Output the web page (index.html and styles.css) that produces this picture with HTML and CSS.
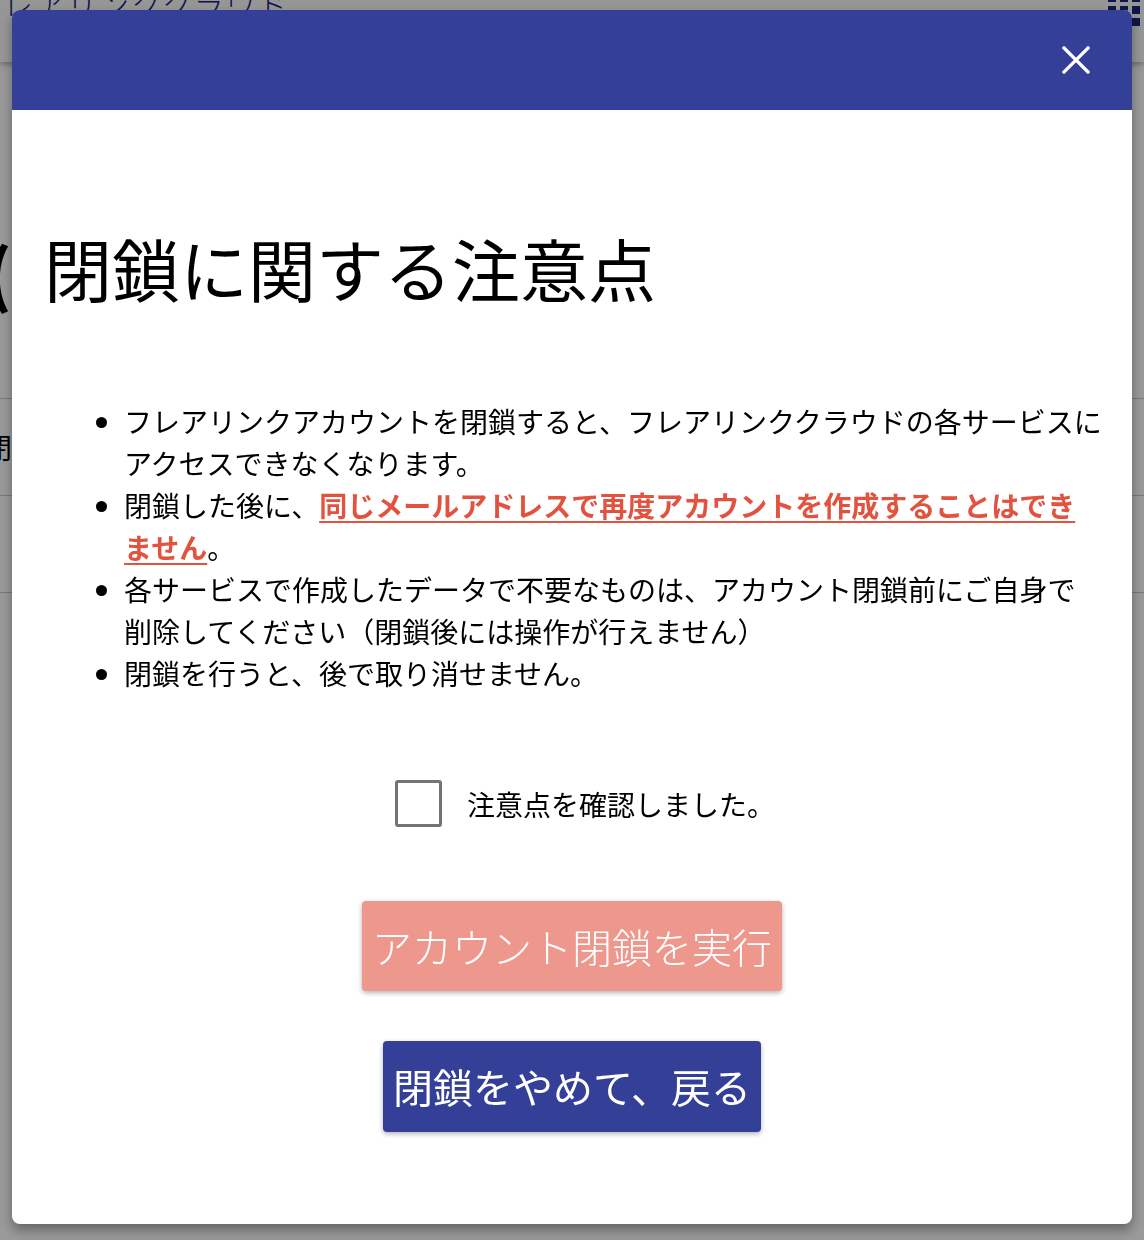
FILE: index.html
```html
<!DOCTYPE html>
<html lang="ja">

<head>
    <meta charset="UTF-8">
    <title>アカウント閉鎖</title>
    <link rel="stylesheet" href="styles.css">
</head>

<body>
    <header class="app-bar">
        <div class="app-title">フレアリンククラウド</div>
        <div class="apps">
            <span></span><span></span><span></span>
            <span></span><span></span><span></span>
            <span></span><span></span><span></span>
        </div>
    </header>

    <main class="page">
        <h1 class="page-title">(</h1>
        <div class="row">閉鎖</div>
        <div class="row"></div>
        <div class="row"></div>
    </main>

    <section id="overlay">
        <article class="dialog">
            <div class="dialog-bar">
                <button class="close" aria-label="閉じる">
                    <svg width="28" height="28" viewBox="0 0 28 28">
                        <path d="M2 2 L26 26 M26 2 L2 26" stroke="#fff" stroke-width="3.2" stroke-linecap="square" fill="none" />
                    </svg>
                </button>
            </div>

            <div class="dialog-body">
                <h2>閉鎖に関する注意点</h2>

                <ul class="notes">
                    <li>フレアリンクアカウントを閉鎖すると、フレアリンククラウドの各サービスにアクセスできなくなります。</li>
                    <li>閉鎖した後に、<a class="warn">同じメールアドレスで再度アカウントを作成することはでき<span class="nowrap">ません</span></a>。</li>
                    <li>各サービスで作成したデータで不要なものは、アカウント閉鎖前にご自身で<span class="nowrap">削除</span>してください（閉鎖後には操作が行えません）</li>
                    <li>閉鎖を行うと、後で取り消せません。</li>
                </ul>

                <label class="confirm">
                    <span class="box"></span>
                    注意点を確認しました。
                </label>

                <div class="actions">
                    <button class="btn btn-danger">アカウント閉鎖を実行</button>
                    <button class="btn btn-primary">閉鎖をやめて、戻る</button>
                </div>
            </div>
        </article>
    </section>
</body>

</html>
```

FILE: styles.css
```css
* {
    box-sizing: border-box;
}

body {
    margin: 0;
    font-family: "Noto Sans CJK JP", "Noto Sans", sans-serif;
    background-color: #fff;
    color: #000;
    overflow: hidden;
}

/* side page behind the dialog */

.app-bar {
    height: 62px;
    background-color: #fafafa;
    box-shadow: 0 2px 6px rgba(0, 0, 0, .35);
    display: flex;
    justify-content: space-between;
    align-items: flex-start;
    overflow: hidden;
}

.app-title {
    margin: -19px 0 0 -29px;
    font-size: 30px;
    color: #1a237e;
    font-weight: 300;
    letter-spacing: 2px;
}

.apps {
    display: grid;
    grid-template-columns: repeat(3, 8px);
    gap: 4px;
    margin: -6px 0 0 0;
    width: 36px;
}

.apps span {
    width: 8px;
    height: 8px;
    background-color: #1a237e;
}

.page-title {
    margin: 168px 0 0 -14px;
    font-size: 68px;
    font-weight: 700;
    line-height: 1.2;
    height: 168px;
}

.row {
    height: 97px;
    border-top: 1px solid #ccc;
    font-size: 28px;
    line-height: 97px;
    margin-left: -16px;
}

/* dialog */

#overlay {
    position: fixed;
    left: 0;
    top: 0;
    width: 100vw;
    height: 100vh;
    background-color: rgba(0, 0, 0, .4);
}

.dialog {
    position: absolute;
    left: 12px;
    top: 10px;
    width: 1120px;
    height: 1214px;
    background-color: #fff;
    border-radius: 8px;
    overflow: hidden;
    box-shadow: 0 6px 12px rgba(0, 0, 0, .35);
}

.dialog-bar {
    height: 100px;
    background-color: #343f98;
    display: flex;
    justify-content: flex-end;
    align-items: center;
    padding-right: 42px;
}

.close {
    background: none;
    border: 0;
    padding: 0;
    width: 28px;
    height: 28px;
    cursor: pointer;
}

.close svg {
    display: block;
}

.dialog-body {
    padding: 0 32px;
}

.dialog-body h2 {
    margin: 117px 0 0 0;
    font-size: 68px;
    line-height: 82px;
    font-weight: 400;
}

.notes {
    margin: 91px -6px 0 0;
    padding-left: 80px;
    font-size: 28px;
    line-height: 42px;
}

.nowrap {
    white-space: nowrap;
}

.warn {
    color: #e2533f;
    font-weight: 700;
    text-decoration: underline;
    text-decoration-thickness: 2px;
    text-underline-offset: 4px;
    cursor: pointer;
}

.confirm {
    margin-top: 86px;
    display: flex;
    justify-content: center;
    align-items: center;
    gap: 25px;
    font-size: 28px;
    padding-left: 26px;
}

.box {
    width: 47px;
    height: 47px;
    border: 3px solid #747474;
    border-radius: 3px;
}

.actions {
    margin-top: 74px;
    display: flex;
    flex-direction: column;
    align-items: center;
    gap: 50px;
}

.btn {
    border: 0;
    border-radius: 4px;
    color: #fff;
    font-family: inherit;
    font-size: 40px;
    line-height: 50px;
    padding: 20px 10px;
    box-shadow: 0 2px 5px rgba(0, 0, 0, .3);
    cursor: pointer;
}

.btn-danger {
    background-color: #ee978c;
    font-weight: 300;
}

.btn-primary {
    background-color: #343f98;
    padding-bottom: 21px;
}
```
